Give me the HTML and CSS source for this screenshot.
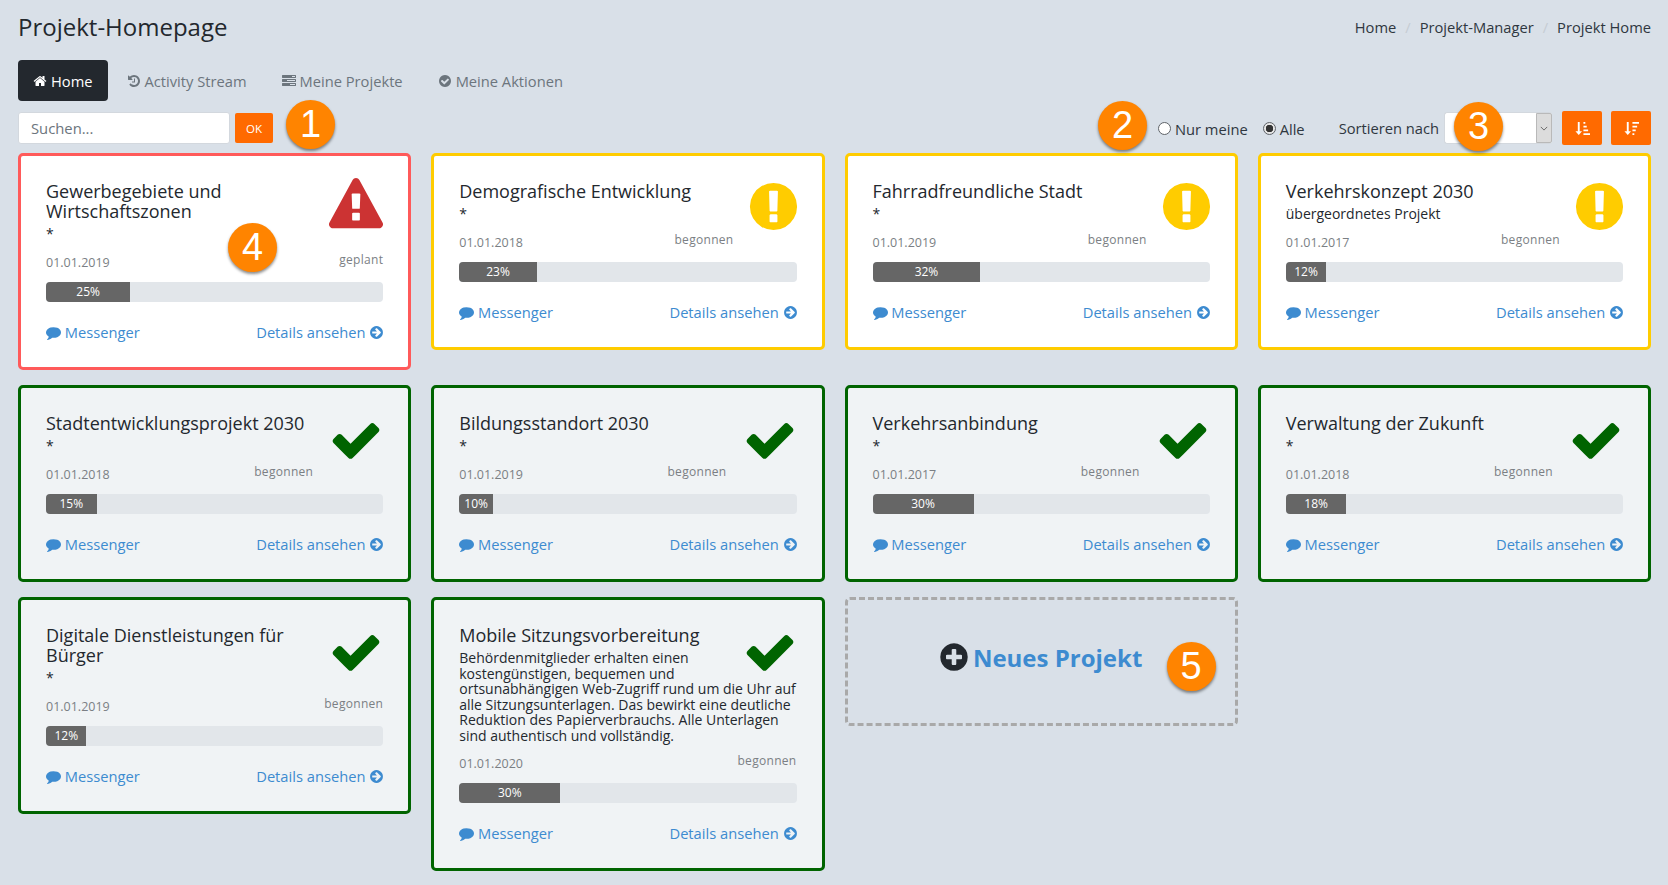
FILE: index.html
```html
<!DOCTYPE html>
<html lang="de">
<head>
<meta charset="utf-8">
<title>Projekt-Homepage</title>
<link rel="stylesheet" href="styles.css">
</head>
<body>
<svg class="defs" width="0" height="0" aria-hidden="true">
<defs>
<symbol id="i-home" viewBox="0 0 1792 1792"><path d="M1472 992v480q0 26-19 45t-45 19h-384v-384h-256v384h-384q-26 0-45-19t-19-45v-480q0-1 .5-3t.5-3l575-474 575 474q1 2 1 6zm223-69l-62 74q-8 9-21 11h-3q-13 0-21-7l-692-577-692 577q-12 8-24 7-13-2-21-11l-62-74q-8-10-7-23.5t11-21.5l719-599q32-26 76-26t76 26l244 204v-195q0-14 9-23t23-9h192q14 0 23 9t9 23v408l219 182q10 8 11 21.5t-7 23.5z"/></symbol>
<symbol id="i-history" viewBox="0 0 1792 1792"><path d="M1664 896q0 156-61 298t-164 245-245 164-298 61q-172 0-327-72.5t-264-204.5q-7-10-6.5-22.5t8.5-20.5l137-138q10-9 25-9 16 2 23 12 73 95 179 147t225 52q104 0 198.5-40.5t163.5-109.5 109.5-163.5 40.5-198.5-40.5-198.5-109.5-163.5-163.5-109.5-198.5-40.5q-98 0-188 35.5t-160 101.5l137 138q31 30 14 69-17 40-59 40h-448q-26 0-45-19t-19-45v-448q0-42 40-59 39-17 69 14l130 129q107-101 244.5-156.5t284.5-55.5q156 0 298 61t245 164 164 245 61 298zm-640-288v448q0 14-9 23t-23 9h-320q-14 0-23-9t-9-23v-64q0-14 9-23t23-9h224v-352q0-14 9-23t23-9h64q14 0 23 9t9 23z"/></symbol>
<symbol id="i-tasks" viewBox="0 0 1792 1792"><path d="M1024 1408h640v-128h-640v128zm-384-512h1024v-128h-1024v128zm640-512h384v-128h-384v128zm512 832v256q0 26-19 45t-45 19h-1664q-26 0-45-19t-19-45v-256q0-26 19-45t45-19h1664q26 0 45 19t19 45zm0-512v256q0 26-19 45t-45 19h-1664q-26 0-45-19t-19-45v-256q0-26 19-45t45-19h1664q26 0 45 19t19 45zm0-512v256q0 26-19 45t-45 19h-1664q-26 0-45-19t-19-45v-256q0-26 19-45t45-19h1664q26 0 45 19t19 45z"/></symbol>
<symbol id="i-check-circle" viewBox="0 0 1792 1792"><path d="M1412 734q0-28-18-46l-91-90q-19-19-45-19t-45 19l-408 407-226-226q-19-19-45-19t-45 19l-91 90q-18 18-18 46 0 27 18 45l362 362q19 19 45 19 27 0 46-19l543-543q18-18 18-45zm252 162q0 209-103 385.5t-279.5 279.5-385.5 103-385.5-103-279.5-279.5-103-385.5 103-385.5 279.5-279.5 385.5-103 385.5 103 279.5 279.5 103 385.5z"/></symbol>
<symbol id="i-check" viewBox="0 0 1792 1792"><path d="M1671 566q0 40-28 68l-724 724-136 136q-28 28-68 28t-68-28l-136-136-362-362q-28-28-28-68t28-68l136-136q28-28 68-28t68 28l294 295 656-657q28-28 68-28t68 28l136 136q28 28 28 68z"/></symbol>
<symbol id="i-excl" viewBox="0 0 1792 1792"><path d="M896 128q209 0 385.5 103t279.5 279.5 103 385.5-103 385.5-279.5 279.5-385.5 103-385.5-103-279.5-279.5-103-385.5 103-385.5 279.5-279.5 385.5-103zm128 1247v-190q0-14-9-23.5t-22-9.5h-192q-13 0-23 10t-10 23v190q0 13 10 23t23 10h192q13 0 22-9.5t9-23.5zm-2-344l18-621q0-12-10-18-10-8-24-8h-220q-14 0-24 8-10 6-10 18l17 621q0 10 10 17.5t24 7.5h185q14 0 23.5-7.5t10.5-17.5z"/></symbol>
<symbol id="i-warn" viewBox="0 0 1792 1792"><path d="M1024 1375v-190q0-14-9.5-23.5t-22.5-9.5h-192q-13 0-22.5 9.5t-9.5 23.5v190q0 14 9.5 23.5t22.5 9.5h192q13 0 22.5-9.5t9.5-23.5zm-2-374l18-459q0-12-10-19-13-11-24-11h-220q-11 0-24 11-10 7-10 21l17 457q0 10 10 16.5t24 6.5h185q14 0 23.5-6.5t10.5-16.5zm-14-934l768 1408q35 63-2 126-17 29-46.5 46t-63.5 17h-1536q-34 0-63.5-17t-46.5-46q-37-63-2-126l768-1408q17-31 47-49t65-18 65 18 47 49z"/></symbol>
<symbol id="i-comment" viewBox="0 0 1792 1792"><path d="M1792 896q0 174-120 321.5t-326 233-450 85.5q-70 0-145-8-198 175-460 242-49 14-114 22-17 2-30.5-9t-17.5-29v-1q-3-4-.5-12t2-10 4.5-9.5l6-9 7-8.5 8-9q7-8 31-34.5t34.5-38 31-39.5 32.5-51 27-59 26-76q-157-89-247.5-220t-90.5-281q0-130 71-248.5t191-204.5 286-136.5 348-50.5q244 0 450 85.5t326 233 120 321.5z"/></symbol>
<symbol id="i-arrow" viewBox="0 0 1792 1792"><path d="M1413 896q0-27-18-45l-91-91-362-362q-18-18-45-18t-45 18l-91 91q-18 18-18 45t18 45l189 189h-502q-26 0-45 19t-19 45v128q0 26 19 45t45 19h502l-189 189q-19 19-19 45t19 45l91 91q18 18 45 18t45-18l362-362 91-91q18-18 18-45zm251 0q0 209-103 385.5t-279.5 279.5-385.5 103-385.5-103-279.5-279.5-103-385.5 103-385.5 279.5-279.5 385.5-103 385.5 103 279.5 279.5 103 385.5z"/></symbol>
<symbol id="i-plus" viewBox="0 0 1792 1792"><path d="M1344 960v-128q0-26-19-45t-45-19h-256v-256q0-26-19-45t-45-19h-128q-26 0-45 19t-19 45v256h-256q-26 0-45 19t-19 45v128q0 26 19 45t45 19h256v256q0 26 19 45t45 19h128q26 0 45-19t19-45v-256h256q26 0 45-19t19-45zm320-64q0 209-103 385.5t-279.5 279.5-385.5 103-385.5-103-279.5-279.5-103-385.5 103-385.5 279.5-279.5 385.5-103 385.5 103 279.5 279.5 103 385.5z"/></symbol>
<symbol id="i-sort-asc" viewBox="0 0 16 16"><path d="M3 1h2v10h2.500L4 15 .5 11H3zM9 1h2v2H9zM9 5h3.500v2H9zM9 9h5v2H9zM9 13h7v2H9z"/></symbol>
<symbol id="i-sort-desc" viewBox="0 0 16 16"><path d="M3 1h2v10h2.500L4 15 .5 11H3zM9 1h7v2H9zM9 5h5v2H9zM9 9h3.500v2H9zM9 13h2v2H9z"/></symbol>
</defs>
</svg>

<header class="top">
  <h1 class="page-title">Projekt-Homepage</h1>
  <nav class="crumbs"><a>Home</a><span class="sep">/</span><a>Projekt-Manager</a><span class="sep">/</span><a>Projekt Home</a></nav>
</header>

<nav class="tabs">
  <a class="tab active"><svg class="ic"><use href="#i-home"/></svg> Home</a>
  <a class="tab"><svg class="ic"><use href="#i-history"/></svg> Activity Stream</a>
  <a class="tab"><svg class="ic"><use href="#i-tasks"/></svg> Meine Projekte</a>
  <a class="tab"><svg class="ic"><use href="#i-check-circle"/></svg> Meine Aktionen</a>
</nav>

<section class="toolbar">
  <div class="search">
    <input class="search-input" type="text" placeholder="Suchen...">
    <button class="ok" type="button">OK</button>
    <span class="badge b1">1</span>
  </div>
  <div class="filters">
    <span class="badge b2">2</span>
    <label class="radio r1"><input type="radio" name="who"> Nur meine</label>
    <label class="radio r2"><input type="radio" name="who" checked> Alle</label>
    <span class="sort-label">Sortieren nach</span>
    <div class="select-wrap">
      <div class="select"><span class="select-arrow"><svg viewBox="0 0 10 6"><path d="M1 1l4 4 4-4" fill="none" stroke="#666" stroke-width="1.200"/></svg></span></div>
      <span class="badge b3">3</span>
    </div>
    <button class="sort" type="button"><svg class="sort-ic"><use href="#i-sort-asc"/></svg></button>
    <button class="sort" type="button"><svg class="sort-ic"><use href="#i-sort-desc"/></svg></button>
  </div>
</section>

<main class="grid">
  <article class="card red">
    <svg class="state warn"><use href="#i-warn"/></svg>
    <h2 class="name">Gewerbegebiete und Wirtschaftszonen</h2>
    <p class="desc">*</p>
    <div class="meta"><span class="date">01.01.2019</span><span class="status">geplant</span></div>
    <div class="track"><div class="fill" style="width:25%">25%</div></div>
    <div class="links"><a class="link"><svg class="ic"><use href="#i-comment"/></svg> Messenger</a><a class="link">Details ansehen <svg class="ic end"><use href="#i-arrow"/></svg></a></div>
    <span class="badge b4">4</span>
  </article>
  <article class="card yellow">
    <svg class="state excl"><use href="#i-excl"/></svg>
    <h2 class="name">Demografische Entwicklung</h2>
    <p class="desc">*</p>
    <div class="meta"><span class="date">01.01.2018</span><span class="status">begonnen</span></div>
    <div class="track"><div class="fill" style="width:23%">23%</div></div>
    <div class="links"><a class="link"><svg class="ic"><use href="#i-comment"/></svg> Messenger</a><a class="link">Details ansehen <svg class="ic end"><use href="#i-arrow"/></svg></a></div>
  </article>
  <article class="card yellow">
    <svg class="state excl"><use href="#i-excl"/></svg>
    <h2 class="name">Fahrradfreundliche Stadt</h2>
    <p class="desc">*</p>
    <div class="meta"><span class="date">01.01.2019</span><span class="status">begonnen</span></div>
    <div class="track"><div class="fill" style="width:32%">32%</div></div>
    <div class="links"><a class="link"><svg class="ic"><use href="#i-comment"/></svg> Messenger</a><a class="link">Details ansehen <svg class="ic end"><use href="#i-arrow"/></svg></a></div>
  </article>
  <article class="card yellow">
    <svg class="state excl"><use href="#i-excl"/></svg>
    <h2 class="name">Verkehrskonzept 2030</h2>
    <p class="desc">übergeordnetes Projekt</p>
    <div class="meta"><span class="date">01.01.2017</span><span class="status">begonnen</span></div>
    <div class="track"><div class="fill" style="width:12%">12%</div></div>
    <div class="links"><a class="link"><svg class="ic"><use href="#i-comment"/></svg> Messenger</a><a class="link">Details ansehen <svg class="ic end"><use href="#i-arrow"/></svg></a></div>
  </article>

  <article class="card green">
    <svg class="state ok-mark"><use href="#i-check"/></svg>
    <h2 class="name">Stadtentwicklungsprojekt 2030</h2>
    <p class="desc">*</p>
    <div class="meta"><span class="date">01.01.2018</span><span class="status">begonnen</span></div>
    <div class="track"><div class="fill" style="width:15%">15%</div></div>
    <div class="links"><a class="link"><svg class="ic"><use href="#i-comment"/></svg> Messenger</a><a class="link">Details ansehen <svg class="ic end"><use href="#i-arrow"/></svg></a></div>
  </article>
  <article class="card green">
    <svg class="state ok-mark"><use href="#i-check"/></svg>
    <h2 class="name">Bildungsstandort 2030</h2>
    <p class="desc">*</p>
    <div class="meta"><span class="date">01.01.2019</span><span class="status">begonnen</span></div>
    <div class="track"><div class="fill" style="width:10%">10%</div></div>
    <div class="links"><a class="link"><svg class="ic"><use href="#i-comment"/></svg> Messenger</a><a class="link">Details ansehen <svg class="ic end"><use href="#i-arrow"/></svg></a></div>
  </article>
  <article class="card green">
    <svg class="state ok-mark"><use href="#i-check"/></svg>
    <h2 class="name">Verkehrsanbindung</h2>
    <p class="desc">*</p>
    <div class="meta"><span class="date">01.01.2017</span><span class="status">begonnen</span></div>
    <div class="track"><div class="fill" style="width:30%">30%</div></div>
    <div class="links"><a class="link"><svg class="ic"><use href="#i-comment"/></svg> Messenger</a><a class="link">Details ansehen <svg class="ic end"><use href="#i-arrow"/></svg></a></div>
  </article>
  <article class="card green">
    <svg class="state ok-mark"><use href="#i-check"/></svg>
    <h2 class="name">Verwaltung der Zukunft</h2>
    <p class="desc">*</p>
    <div class="meta"><span class="date">01.01.2018</span><span class="status">begonnen</span></div>
    <div class="track"><div class="fill" style="width:18%">18%</div></div>
    <div class="links"><a class="link"><svg class="ic"><use href="#i-comment"/></svg> Messenger</a><a class="link">Details ansehen <svg class="ic end"><use href="#i-arrow"/></svg></a></div>
  </article>

  <article class="card green">
    <svg class="state ok-mark"><use href="#i-check"/></svg>
    <h2 class="name">Digitale Dienstleistungen für Bürger</h2>
    <p class="desc">*</p>
    <div class="meta"><span class="date">01.01.2019</span><span class="status">begonnen</span></div>
    <div class="track"><div class="fill" style="width:12%">12%</div></div>
    <div class="links"><a class="link"><svg class="ic"><use href="#i-comment"/></svg> Messenger</a><a class="link">Details ansehen <svg class="ic end"><use href="#i-arrow"/></svg></a></div>
  </article>
  <article class="card green">
    <svg class="state ok-mark"><use href="#i-check"/></svg>
    <h2 class="name">Mobile Sitzungsvorbereitung</h2>
    <p class="desc">Behördenmitglieder erhalten einen kostengünstigen, bequemen und ortsunabhängigen Web-Zugriff rund um die Uhr auf alle Sitzungsunterlagen. Das bewirkt eine deutliche Reduktion des Papierverbrauchs. Alle Unterlagen sind authentisch und vollständig.</p>
    <div class="meta"><span class="date">01.01.2020</span><span class="status">begonnen</span></div>
    <div class="track"><div class="fill" style="width:30%">30%</div></div>
    <div class="links"><a class="link"><svg class="ic"><use href="#i-comment"/></svg> Messenger</a><a class="link">Details ansehen <svg class="ic end"><use href="#i-arrow"/></svg></a></div>
  </article>
  <article class="new-card">
    <a class="new-link"><svg class="new-ic"><use href="#i-plus"/></svg> Neues Projekt</a>
    <span class="badge b5">5</span>
  </article>
</main>
</body>
</html>
```
FILE: styles.css
```css
* { box-sizing: border-box; }
html, body { margin: 0; }
body {
  height: 885px;
  overflow: hidden;
  padding: 0 17px 0 18px;
  background: #d9e0e8;
  color: #23282e;
  font-family: "Open Sans", sans-serif;
  font-size: 14px;
}
.defs { position: absolute; }
.ic { width: 15px; height: 15px; fill: currentColor; vertical-align: -2px; }
.ic.end { margin-right: -1px; }

.top { display: flex; justify-content: space-between; align-items: center; height: 56px; padding-bottom: 2px; }
.page-title { margin: 0; font-size: 24px; font-weight: 400; line-height: 28px; color: #23282e; }
.crumbs { display: flex; font-size: 14.700px; color: #2f3740; margin-top: -1px; }
.sep { color: #c6ccd3; margin: 0 9px; }

.tabs { display: flex; margin-top: 4px; height: 41px; }
.tab { display: flex; align-items: center; gap: 4px; padding: 0 15px; border-radius: 4px; color: #6c757d; font-size: 14.700px; margin-right: 5px; }
.tab .ic { width: 14px; height: 14px; }
.tab:first-child { margin-right: 4px; }
.tab.active { background: #23282e; color: #fff; }

.toolbar { display: flex; justify-content: space-between; margin-top: 11px; height: 41px; }
.search { display: flex; align-items: flex-start; position: relative; }
.search-input { width: 212px; height: 32px; padding: 0 12px; border: 1px solid #d3d8de; border-radius: 3px; background: #fff; font: 14.800px "Open Sans", sans-serif; outline: none; }
.search-input::placeholder { color: #6c757d; opacity: 1; }
.ok { width: 38px; height: 30px; margin: 1px 0 0 5px; border: 0; border-radius: 2px; background: #ff6a00; color: #fff; font: 11.500px "Open Sans", sans-serif; padding: 0; }

.filters { display: flex; align-items: flex-start; position: relative; }
.radio { display: flex; align-items: center; gap: 4px; height: 33px; font-size: 14.700px; color: #2f3740; }
.radio input { appearance: none; width: 13px; height: 13px; margin: 0; border: 1px solid #5f6368; border-radius: 50%; background: #fff; }
.radio input:checked { background: radial-gradient(circle, #333 0 3.500px, #e6e6e6 4px); }
.r1 { margin-right: 15px; }
.r2 { margin-right: 34px; }
.sort-label { line-height: 32px; font-size: 14.700px; color: #2f3740; margin-right: 5px; }
.select-wrap { position: relative; }
.select { width: 108px; height: 32px; background: #fff; border-radius: 3px; border: 1px solid #d3d8de; border-right: 0; position: relative; margin-right: 10px; }
.select-arrow { position: absolute; right: 0; top: 0; bottom: 0; width: 16px; background: #dcdcdc; border: 1px solid #b9b9b9; border-radius: 0 2px 2px 0; display: flex; align-items: center; justify-content: center; }
.select-arrow svg { width: 8px; height: 5px; }
.sort { width: 40px; height: 34px; margin: -1px 0 0; border: 0; border-radius: 2px; background: #ff6a00; display: flex; align-items: center; justify-content: center; padding: 0; }
.sort + .sort { margin-left: 9px; }
.sort-ic { width: 15px; height: 15px; fill: #fff; }

.badge {
  position: absolute;
  width: 49px;
  height: 49px;
  border-radius: 50%;
  background: #ff8400;
  color: #fff;
  font: 38px/49px "Liberation Sans", sans-serif;
  text-align: center;
  box-shadow: 0 2px 3px rgba(0, 0, 0, .45);
  z-index: 2;
}
.b1 { left: 268px; top: -12px; }
.b2 { left: -60px; top: -11px; }
.b3 { left: 10px; top: -10px; }
.b4 { left: 207px; top: 67px; }
.b5 { left: 319px; top: 42px; }

.grid { display: grid; grid-template-columns: repeat(4, 1fr); column-gap: 20px; row-gap: 15.500px; align-items: start; }
.card { position: relative; display: flow-root; padding: 25px; border: 3px solid; border-radius: 5px; }
.red { border-color: #ff5a5a; background: #fff; }
.yellow { border-color: #ffcc00; background: #fff; }
.green { border-color: #006400; background: #f0f3f5; }
.state { float: right; }
.warn { width: 54px; height: 54px; margin: -3px 0 0 8px; fill: #cc3333; }
.excl { width: 55px; height: 55px; margin: -2px -4px 0 12px; fill: #ffcc00; }
.ok-mark { width: 54px; height: 54px; margin: 0 0 0 16px; fill: #006400; }
.name { margin: 0; font-size: 18px; font-weight: 400; line-height: 20px; color: #23282e; }
.desc { margin: 0; padding-top: 5px; font-size: 14px; line-height: 15.500px; color: #23282e; }
.meta { display: flex; justify-content: space-between; align-items: flex-start; margin-top: 10px; height: 30px; }
.date { font-size: 12.500px; line-height: 16px; padding-top: 3px; color: #7b7f84; }
.status { font-size: 12px; line-height: 16px; letter-spacing: .3px; color: #7b7f84; }
.track { clear: both; height: 20px; border-radius: 4px; background: #e2e6ea; overflow: hidden; }
.fill { height: 100%; background: #666; color: #fff; font-size: 12px; line-height: 20px; text-align: center; }
.links { display: flex; justify-content: space-between; margin-top: 20px; line-height: 20px; }
.link { color: #3d8bd0; font-size: 14.700px; }

.new-card { position: relative; height: 129px; border: 3px dashed #a9a9a9; border-radius: 5px; display: flex; justify-content: center; padding-top: 41px; }
.new-link { display: flex; align-items: center; gap: 3px; height: 32px; padding-right: 2px; color: #3d8bd0; font-size: 24px; font-weight: 700; }
.new-ic { width: 32px; height: 32px; fill: #23282e; }
```
